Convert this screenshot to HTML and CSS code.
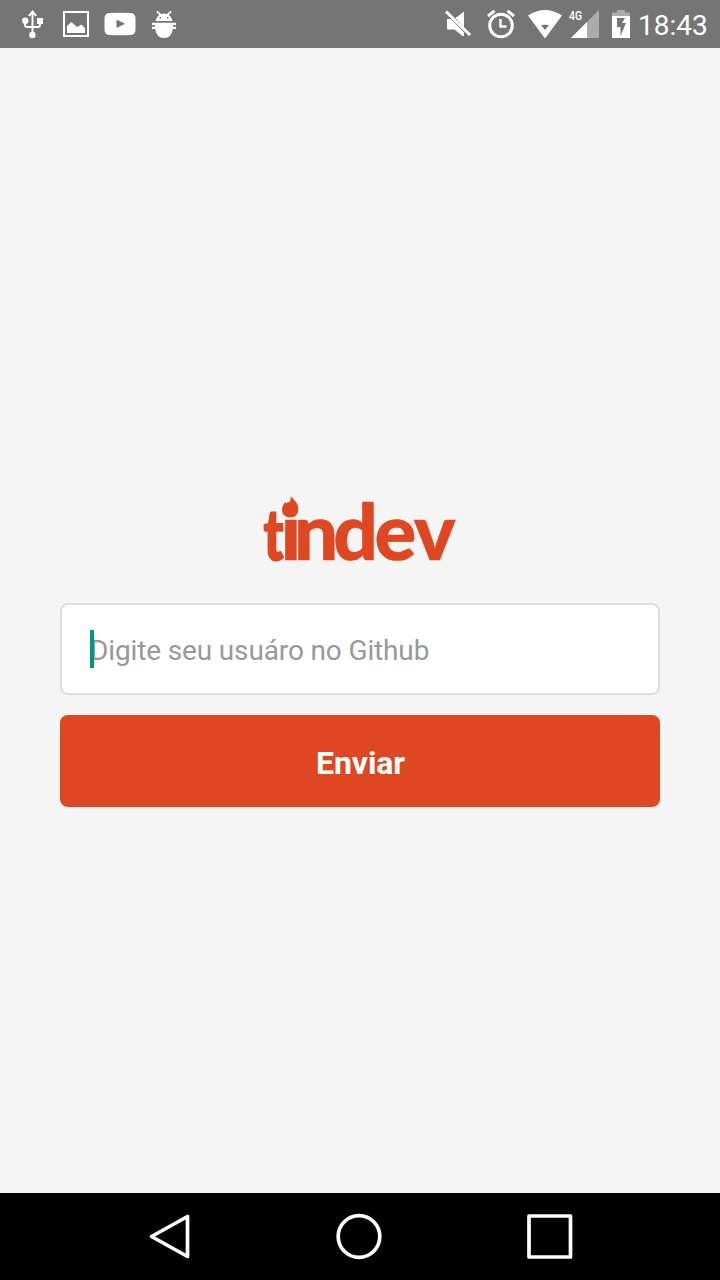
FILE: index.html
```html
<!DOCTYPE html>
<html lang="pt-BR">
<head>
<meta charset="utf-8">
<title>tindev</title>
<link rel="stylesheet" href="styles.css">
</head>
<body>
<div class="screen">
  <header class="status-bar">
    <div class="notifications">
      <svg class="icon" viewBox="16 8 32 32">
        <path class="line" d="M32.5 13V34M25 21V24.5Q25 27 27 27H38Q40 27 40 24.5V21"/>
        <path d="M28 15.500L32.500 10L37 15.500L35.500 16.500L32.500 13.500L29.500 16.500zM37 18H43V24H37z"/>
        <circle cx="25.300" cy="20.700" r="3.200"/><circle cx="32.400" cy="35" r="3.200"/>
      </svg>
      <svg class="icon" viewBox="60 8 32 32">
        <path class="frame" d="M64 12H88V36H64z"/>
        <path d="M67 33V26L71.500 22L77 27L81.500 24.500L85 28V33z"/>
      </svg>
      <svg class="icon" viewBox="104 8 32 32">
        <path fill-rule="evenodd" d="M110 13Q120 12.400 130 13Q135.500 13 135.500 18.500V29.500Q135.500 35 130 35Q120 35.600 110 35Q104.500 35 104.500 29.500V18.500Q104.500 13 110 13zM116.500 19.500V28L125 23.800z"/>
      </svg>
      <svg class="icon" viewBox="148 8 32 32">
        <path fill-rule="evenodd" d="M155.500 21Q156 17 159.200 14.700L156.200 12L157.500 10.700L161 14Q164 12.800 167 14L170.500 10.700L171.800 12L168.800 14.700Q172 17 172.500 21zM159.500 17V18.500H161V17zM167 17V18.500H168.500V17z"/>
        <path d="M152 22.800H176V25H173V26.800H176V29H172.800Q171.500 38 164 38Q156.500 38 155.200 29H152V26.800H155V25H152z"/>
      </svg>
    </div>
    <div class="system">
      <svg class="mute" viewBox="444 8 28 32">
        <path d="M447 19H451L464 32.500V36H462.500L454.500 29.500H447zM455.500 18L464 11.500V27.500z"/>
        <path class="slash" d="M446 11.500L470 35"/>
      </svg>
      <svg class="alarm" viewBox="486 8 30 32">
        <circle class="ring" cx="501" cy="25.500" r="11.300"/>
        <path class="ring" d="M488 16L494.500 10.800M507.500 10.800L514 16"/>
        <path class="hand" d="M500.500 19V26.500H506.500"/>
      </svg>
      <svg class="wifi" viewBox="527 8 36 32">
        <path fill-rule="evenodd" d="M528 15.500Q545 4.500 562 15.500L545 38.500zM541 25L545 30L549 25Q545 24.500 541 25z"/>
      </svg>
      <div class="mobile">
        <svg class="signal" viewBox="571 8 29 32">
          <path class="dim" d="M599 10V38H571z"/><path d="M587 22V38H571z"/>
        </svg>
        <span class="network">4G</span>
      </div>
      <svg class="battery" viewBox="612 8 18 32">
        <path class="dim" d="M617 10H625V12.500H630V16H612V12.500H617z"/>
        <path fill-rule="evenodd" d="M612 16H630V38H612zM617 18V27H620.500V36L626 23H622L625 18z"/>
      </svg>
      <time class="clock">18:43</time>
    </div>
  </header>

  <main class="login">
    <svg class="logo" viewBox="264 496 194 66" role="img" aria-label="tindev">
      <text class="wordmark narrow" transform="translate(263.500 560) scale(.68 .91)">t</text>
      <text class="wordmark" x="280.800 294 333.300 374.600 414" y="560">indev</text>
      <path class="flame" d="M290.500 496.500Q298.500 502.500 298.300 509.500Q298 517.500 290 517.500Q282 517 282 509.500Q282.300 505 285.700 502Q286 503.500 287 504.300Q291.500 501.500 290.500 496.500z"/>
    </svg>
    <form class="form">
      <div class="field">
        <span class="caret"></span>
        <input class="username" type="text" placeholder="Digite seu usuáro no Github">
      </div>
      <button class="submit" type="button">Enviar</button>
    </form>
  </main>

  <nav class="nav-bar">
    <svg class="key" viewBox="146 1212 48 48"><path d="M187.500 1216.500V1256.500L151.500 1236.500z"/></svg>
    <svg class="key" viewBox="335 1212 48 48"><circle cx="359" cy="1236.500" r="20.800"/></svg>
    <svg class="key" viewBox="526 1212 48 48"><path d="M529 1216H570.500V1257H529z"/></svg>
  </nav>
</div>
</body>
</html>
```

FILE: styles.css
```css
* { box-sizing: border-box; }
body { margin: 0; font-family: Roboto, sans-serif; }
svg { display: block; fill: #fff; flex: none; }

.screen {
  display: flex;
  flex-direction: column;
  height: 1280px;
  background: #f5f5f5;
}

.status-bar {
  display: flex;
  justify-content: space-between;
  align-items: center;
  height: 48px;
  padding: 0 12px 0 16px;
  background: #757575;
}
.notifications { display: flex; gap: 12px; }
.icon { width: 32px; height: 32px; }
.line { fill: none; stroke: #fff; stroke-width: 2; }
.frame { fill: none; stroke: #fff; stroke-width: 2; }
.system { display: flex; align-items: center; color: #fff; }
.mute { width: 28px; height: 32px; margin-right: 14px; }
.slash { stroke: #fff; stroke-width: 3; }
.alarm { width: 30px; height: 32px; margin-right: 11px; }
.ring { fill: none; stroke: #fff; stroke-width: 3; }
.hand { fill: none; stroke: #fff; stroke-width: 2.4; }
.wifi { width: 36px; height: 32px; margin-right: 8px; }
.mobile { position: relative; margin-right: 12px; }
.signal { width: 29px; height: 32px; }
.dim { fill: #acacac; }
.network {
  position: absolute;
  top: 1px;
  left: -2px;
  font-size: 12px;
  line-height: 14px;
  font-weight: 500;
  transform: scaleX(.87);
  transform-origin: left;
}
.battery { width: 18px; height: 32px; margin-right: 8px; }
.clock { width: 70px; font-size: 28px; line-height: 32px; padding-top: 3px; white-space: nowrap; }

.login {
  flex: 1;
  display: flex;
  flex-direction: column;
  align-items: center;
  padding: 448px 60px 0;
}
.logo { width: 194px; height: 66px; margin-left: 2px; overflow: visible; fill: #df4723; }
.wordmark { font: 900 78px Lato, sans-serif; stroke: #df4723; stroke-width: .6; }
.narrow { stroke-width: 2; }
.form { display: flex; flex-direction: column; gap: 20px; width: 100%; margin-top: 41px; }
.field { position: relative; height: 92px; }
.username {
  width: 100%;
  height: 92px;
  padding: 2px 28px 0;
  border: 2px solid #ddd;
  border-radius: 8px;
  background: #fff;
  font: 28px Roboto, sans-serif;
  letter-spacing: -.14px;
  outline: none;
}
.username::placeholder { color: #999; opacity: 1; }
.caret { position: absolute; left: 30px; top: 27px; width: 4px; height: 38px; background: #009688; }
.submit {
  height: 92px;
  padding: 4px 0 0 1px;
  border: 0;
  border-radius: 8px;
  background: #df4723;
  color: #fff;
  font: bold 32px Roboto, sans-serif;
  letter-spacing: -.1px;
}

.nav-bar {
  display: grid;
  grid-template-columns: 189px 191px 48px;
  height: 87px;
  padding: 19px 146px 0;
  background: #000;
}
.key { width: 48px; height: 48px; fill: none; stroke: #fff; stroke-width: 3.7; stroke-linejoin: round; }
```
